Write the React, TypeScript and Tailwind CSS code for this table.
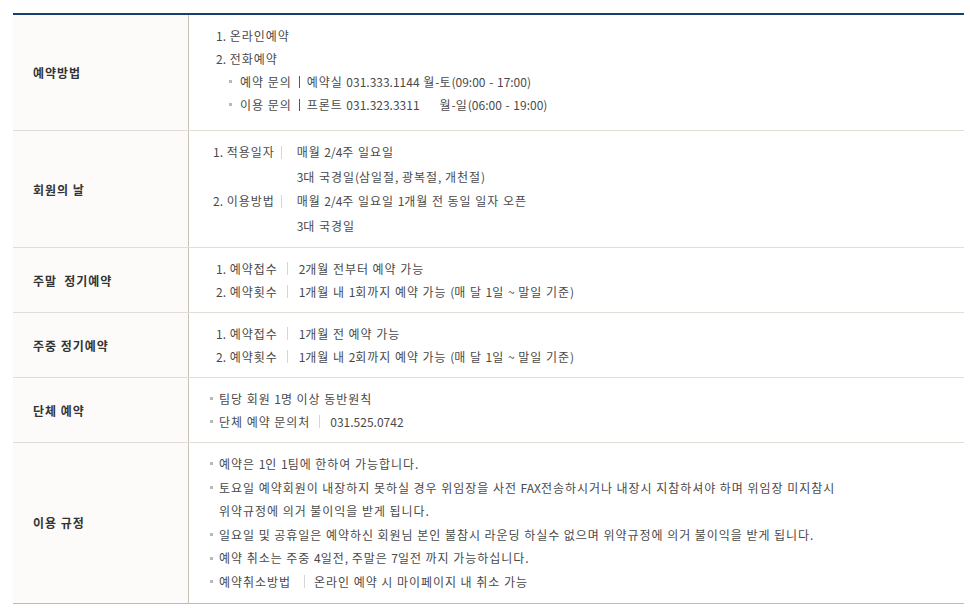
// Hangul in Noto CJK KR is 0.92em wide; the reference font draws it at a full 12px,
// so widen Hangul runs (and spaces) a touch.
const T = ({ children }: { children: string }) => (
  <span>
    {children.split(/([\uAC00-\uD7A3\u3131-\u318E ]+)/).map((part, i) =>
      i % 2 === 1 ? (
        <span key={i} className="tracking-[0.96px]">
          {part}
        </span>
      ) : (
        part
      )
    )}
  </span>
);

const Dot = ({ className = "" }: { className?: string }) => (
  <span className={`inline-block w-[3px] h-[3px] bg-[#b8b8b8] ${className}`} />
);

const Sep = ({ className = "" }: { className?: string }) => (
  <span className={`inline-block w-px h-[13px] bg-[#d6d6d6] ${className}`} />
);

const Pipe = () => <span className="inline-block w-px h-[12px] bg-[#555] mx-[7px]" />;

function Row({
  label,
  children,
  last = false,
  className = "",
}: {
  label: string;
  children: React.ReactNode;
  last?: boolean;
  className?: string;
}) {
  return (
    <div className={`flex border-b ${last ? "border-[#c4bbad]" : "border-[#e2ded7]"}`}>
      <div className="w-[176px] shrink-0 bg-[#fcfbf9] border-r border-[#c9c1b5] flex items-center pl-[20px] font-bold text-[#333] whitespace-pre">
        <T>{label}</T>
      </div>
      <div className={`flex-1 ${className}`}>{children}</div>
    </div>
  );
}

export default function App() {
  return (
    <div className="min-h-screen bg-white pt-[13px] font-['Noto_Sans_CJK_KR',sans-serif] text-[12px]">
      <div className="ml-[13px] w-[951px] border-t-2 border-[#15406d] text-[#4a4a4a] leading-[23px]">
        <Row label="예약방법" className="pl-[27px] pt-[9px] pb-[14px]">
          <div><T>1. 온라인예약</T></div>
          <div><T>2. 전화예약</T></div>
          <div className="pl-[13px] flex items-center">
            <Dot className="mr-[8px]" />
            <T>예약 문의</T>
            <Pipe />
            <T>예약실 031.333.1144 월-토(09:00 - 17:00)</T>
          </div>
          <div className="pl-[13px] flex items-center">
            <Dot className="mr-[8px]" />
            <T>이용 문의</T>
            <Pipe />
            <T>프론트 031.323.3311</T>
            <span className="w-[20px]" />
            <T>월-일(06:00 - 19:00)</T>
          </div>
        </Row>

        <Row label="회원의 날" className="pl-[24px] py-[9px] leading-[24.5px]">
          <div className="grid grid-cols-[auto_auto_1fr] items-center">
            <T>1. 적용일자</T>
            <Sep className="ml-[6px] mr-[15px]" />
            <T>매월 2/4주 일요일</T>
            <span />
            <span />
            <T>3대 국경일(삼일절, 광복절, 개천절)</T>
            <T>2. 이용방법</T>
            <Sep className="ml-[6px] mr-[15px]" />
            <T>매월 2/4주 일요일 1개월 전 동일 일자 오픈</T>
            <span />
            <span />
            <T>3대 국경일</T>
          </div>
        </Row>

        <Row label="주말  정기예약" className="pl-[27px] py-[9px]">
          <div className="flex items-center">
            <T>1. 예약접수</T>
            <Sep className="ml-[9px] mr-[11px]" />
            <T>2개월 전부터 예약 가능</T>
          </div>
          <div className="flex items-center">
            <T>2. 예약횟수</T>
            <Sep className="ml-[9px] mr-[11px]" />
            <T>1개월 내 1회까지 예약 가능 (매 달 1일 ~ 말일 기준)</T>
          </div>
        </Row>

        <Row label="주중 정기예약" className="pl-[27px] py-[9px]">
          <div className="flex items-center">
            <T>1. 예약접수</T>
            <Sep className="ml-[9px] mr-[11px]" />
            <T>1개월 전 예약 가능</T>
          </div>
          <div className="flex items-center">
            <T>2. 예약횟수</T>
            <Sep className="ml-[9px] mr-[11px]" />
            <T>1개월 내 2회까지 예약 가능 (매 달 1일 ~ 말일 기준)</T>
          </div>
        </Row>

        <Row label="단체 예약" className="pl-[21px] py-[9px]">
          <div className="flex items-center">
            <Dot className="mr-[6px]" />
            <T>팀당 회원 1명 이상 동반원칙</T>
          </div>
          <div className="flex items-center">
            <Dot className="mr-[6px]" />
            <T>단체 예약 문의처</T>
            <Sep className="ml-[9px] mr-[10px]" />
            <T>031.525.0742</T>
          </div>
        </Row>

        <Row label="이용 규정" last className="pl-[21px] py-[9px] leading-[23.6px]">
          <div className="flex items-center">
            <Dot className="mr-[6px]" />
            <T>예약은 1인 1팀에 한하여 가능합니다.</T>
          </div>
          <div className="flex items-center">
            <Dot className="mr-[6px]" />
            <T>토요일 예약회원이 내장하지 못하실 경우 위임장을 사전 FAX전송하시거나 내장시 지참하셔야 하며 위임장 미지참시</T>
          </div>
          <div className="pl-[9px]">
            <T>위약규정에 의거 불이익을 받게 됩니다.</T>
          </div>
          <div className="flex items-center">
            <Dot className="mr-[6px]" />
            <T>일요일 및 공휴일은 예약하신 회원님 본인 불참시 라운딩 하실수 없으며 위약규정에 의거 불이익을 받게 됩니다.</T>
          </div>
          <div className="flex items-center">
            <Dot className="mr-[6px]" />
            <T>예약 취소는 주중 4일전, 주말은 7일전 까지 가능하십니다.</T>
          </div>
          <div className="flex items-center">
            <Dot className="mr-[6px]" />
            <T>예약취소방법</T>
            <Sep className="ml-[13px] mr-[9px]" />
            <T>온라인 예약 시 마이페이지 내 취소 가능</T>
          </div>
        </Row>
      </div>
    </div>
  );
}
